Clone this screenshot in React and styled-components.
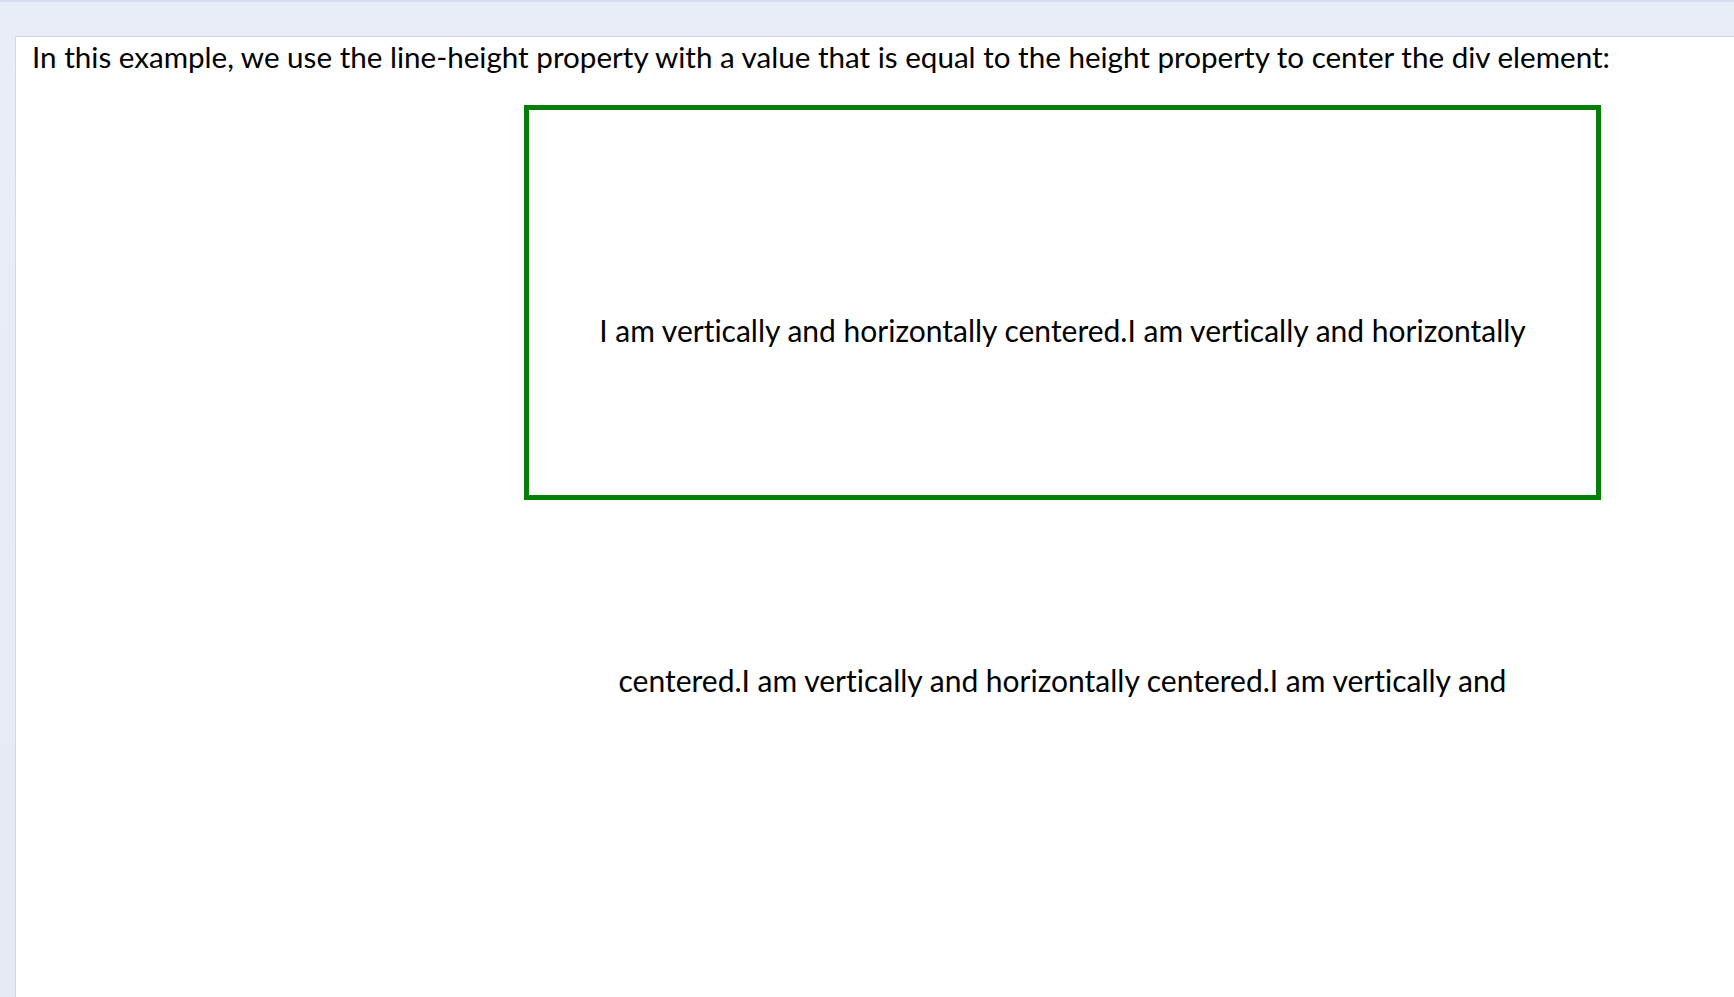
import styled, { createGlobalStyle } from "styled-components";

const GlobalStyle = createGlobalStyle`
  html, body {
    margin: 0;
    padding: 0;
    background: #e8ecf5;
  }
  body {
    font-family: "Lato", "Noto Sans", sans-serif;
    font-variant-ligatures: none;
    color: #000;
  }
`;

const Page = styled.div`
  border-top: 2px solid #d6def0;
  padding: 34px 0 0 15px;
  background: linear-gradient(#e9edf7, #e6eaf3);
  min-height: 997px;
  box-sizing: border-box;
`;

const Panel = styled.main`
  background: #fff;
  border-top: 1px solid #d4d7dd;
  border-left: 1px solid #d4d7dd;
  min-height: 961px;
  padding: 0 0 0 16px;
  overflow: hidden;
`;

const Intro = styled.p`
  margin: 0;
  font-size: 29.6px;
  line-height: 40px;
`;

// line-height equal to the box height: the text overflows the box
const CenterBox = styled.div`
  box-sizing: border-box;
  width: 1077px;
  height: 395px;
  margin: 28px 0 0 492px;
  padding: 45px 24px 0;
  border: 5px solid #067f06;
  text-align: center;
  font-size: 30px;
  line-height: 350px;
`;

export default function App() {
  return (
    <>
      <GlobalStyle />
      <Page>
        <Panel>
          <Intro>
            In this example, we use the line-height property with a value that is equal to the
            height property to center the div element:
          </Intro>
          <CenterBox>
            I am vertically and horizontally centered.I am vertically and horizontally
            centered.I am vertically and horizontally centered.I am vertically and horizontally
            centered.
          </CenterBox>
        </Panel>
      </Page>
    </>
  );
}
